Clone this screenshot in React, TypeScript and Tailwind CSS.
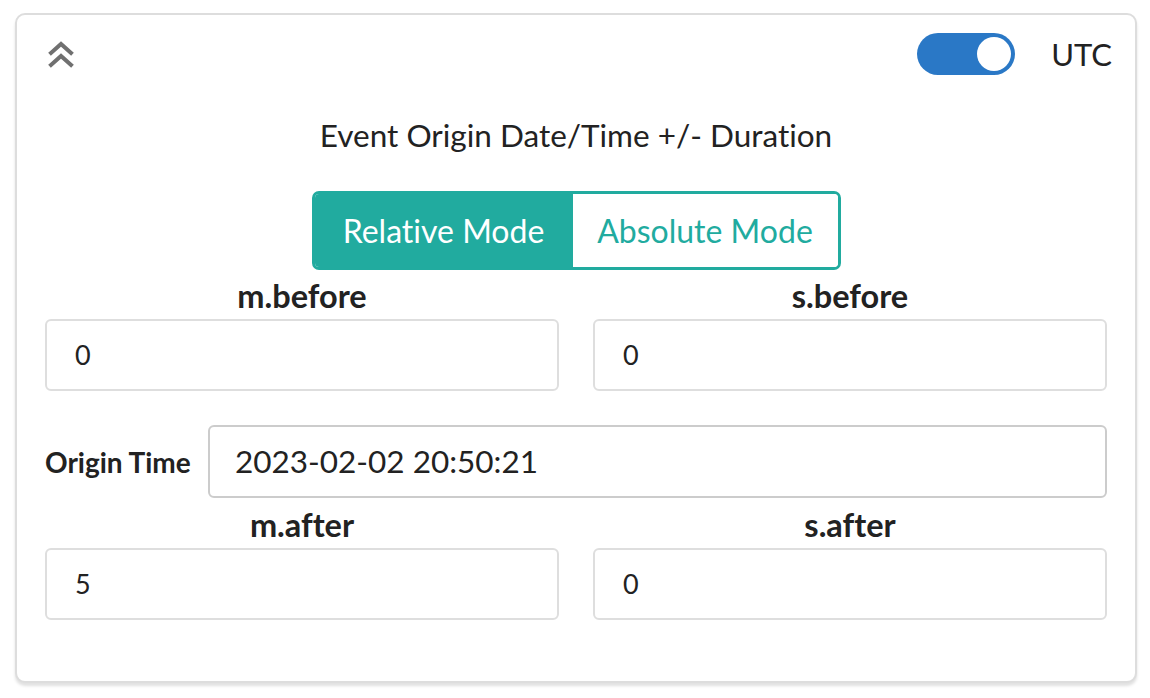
import React from "react";

const font = { fontFamily: "Lato, 'Noto Sans', sans-serif" };

function Field({ label, value }: { label: string; value: string }) {
  return (
    <div className="flex flex-col">
      <div className="text-center text-[32.5px] font-bold leading-[32px] text-[#222]">{label}</div>
      <div className="mt-[7px] flex h-[72px] items-center rounded-[6px] border-2 border-[#dedede] bg-white pl-[28px] text-[27px] text-[#222]">
        {value}
      </div>
    </div>
  );
}

export default function App() {
  return (
    <div className="h-[698px] w-[1150px] bg-white pl-[15px] pt-[13px] [font-variant-ligatures:none]" style={font}>
      <div className="h-[670px] w-[1122px] rounded-[10px] border-2 border-[#dddddd] bg-white px-[28px] pt-[18px] shadow-[0_3px_3px_rgba(0,0,0,0.12)]">
        <div className="flex h-[42px] items-center justify-between">
          <svg width="26" height="28" viewBox="0 0 26 28" className="ml-[3px]" fill="none" stroke="#707070" strokeWidth="4" strokeLinecap="square">
            <path d="M3 13 L13 4 L23 13" />
            <path d="M3 25 L13 16 L23 25" />
          </svg>
          <div className="flex items-center">
            <div className="flex h-[42px] w-[98px] items-center justify-end rounded-full bg-[#2a78c6] pr-[4px]">
              <div className="h-[34px] w-[34px] rounded-full bg-white" />
            </div>
            <span className="ml-[36px] mr-[-5px] text-[31px] leading-none text-[#222]">UTC</span>
          </div>
        </div>
        <div className="mt-[42px] text-center text-[31.5px] leading-[36px] text-[#222]">
          Event Origin Date/Time +/- Duration
        </div>
        <div className="mt-[38px] flex justify-center">
          <div className="flex h-[79px] overflow-hidden rounded-[7px] border-[3px] border-[#21ab9f]">
            <div className="flex w-[258px] items-center justify-center bg-[#21ab9f] text-[32px] text-white">Relative Mode</div>
            <div className="flex w-[265px] items-center justify-center bg-white text-[32px] text-[#21ab9f]">Absolute Mode</div>
          </div>
        </div>
        <div className="mt-[10px] grid grid-cols-2 gap-x-[34px]">
          <Field label="m.before" value="0" />
          <Field label="s.before" value="0" />
        </div>
        <div className="mt-[34px] flex h-[73px] items-center">
          <div className="w-[163px] text-[28px] font-bold text-[#222]">Origin Time</div>
          <div className="flex h-[73px] flex-1 items-center rounded-[6px] border-2 border-[#cccccc] pl-[25px] text-[31.5px] text-[#222]">
            2023-02-02 20:50:21
          </div>
        </div>
        <div className="mt-[11px] grid grid-cols-2 gap-x-[34px]">
          <Field label="m.after" value="5" />
          <Field label="s.after" value="0" />
        </div>
      </div>
    </div>
  );
}
